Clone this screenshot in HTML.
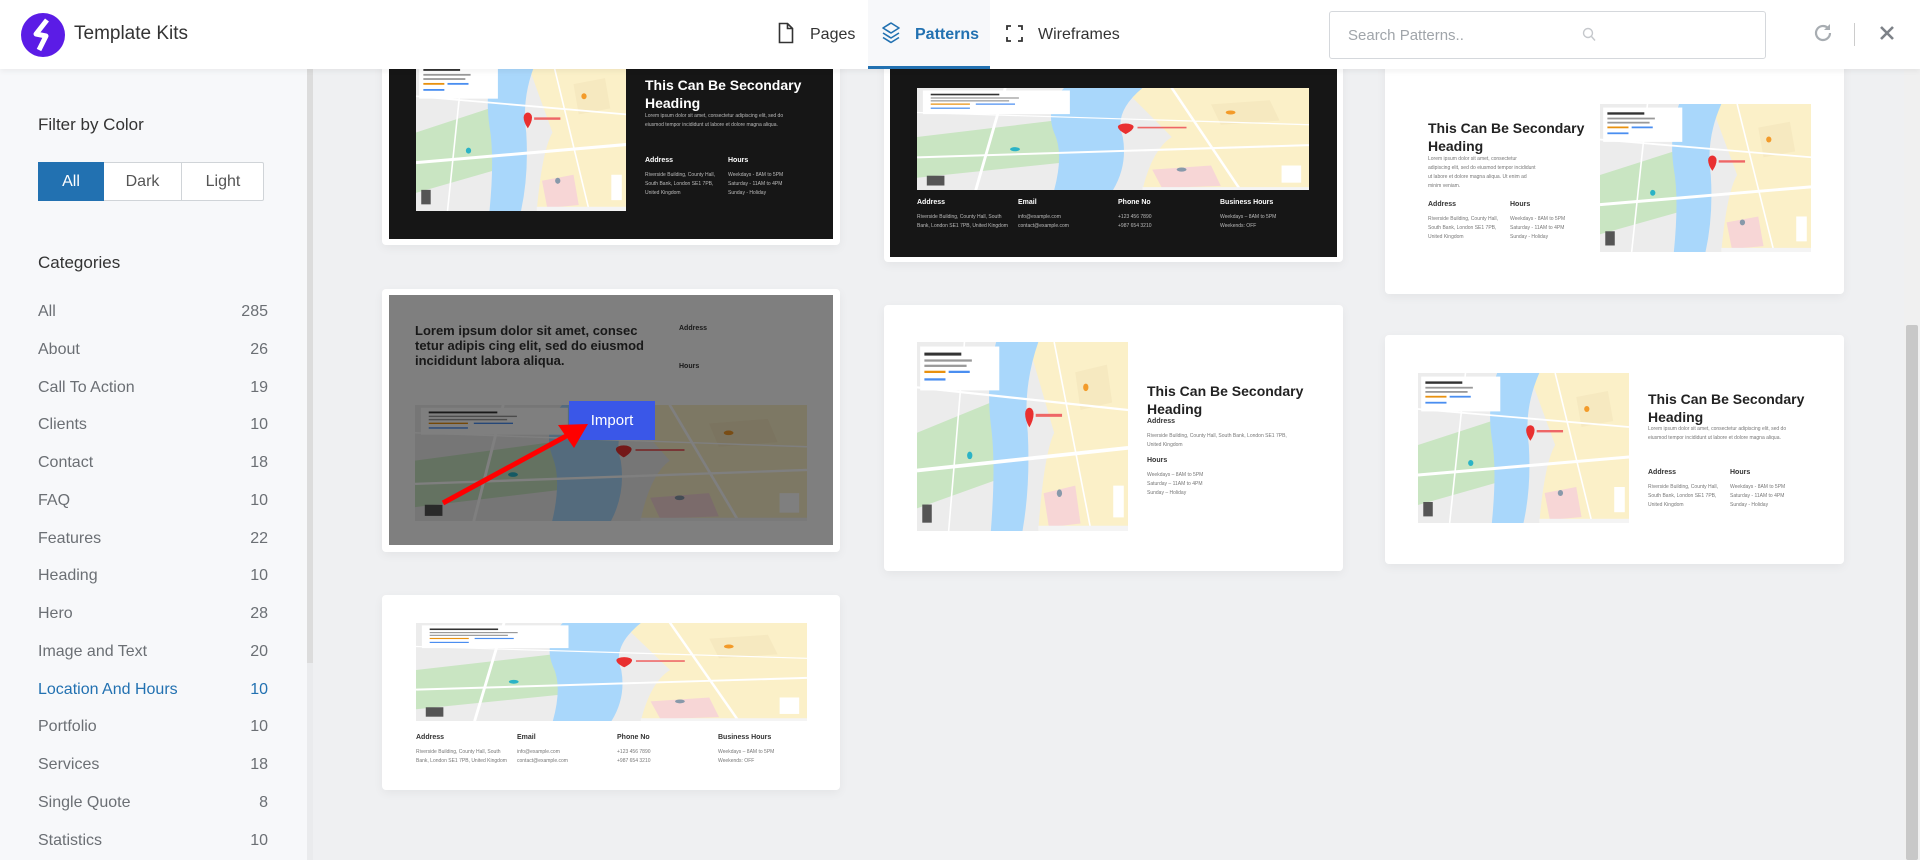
<!DOCTYPE html>
<html><head><meta charset="utf-8">
<style>
*{box-sizing:border-box;margin:0;padding:0}
body{width:1920px;height:860px;overflow:hidden;background:#eff0f2;font-family:"Liberation Sans",sans-serif;position:relative}
.abs{position:absolute}
#hdr{left:0;top:0;width:1920px;height:69px;background:#fff;box-shadow:0 2px 6px rgba(0,0,0,.06);z-index:10}
#side{left:0;top:69px;width:307px;height:791px;background:#f7f8fa}
#strip{left:307px;top:69px;width:6px;height:594px;background:#dcdcdc}
#strip2{left:307px;top:663px;width:6px;height:197px;background:#eaebed}
.cat{position:absolute;left:38px;width:230px;font-size:16px;color:#6b6f74;display:flex;justify-content:space-between}
.card{position:absolute;background:#fff;border-radius:4px;box-shadow:0 3px 10px rgba(0,0,0,.05)}
.dark{position:absolute;background:#161616}
.t{position:absolute;font-family:"Liberation Sans",sans-serif}
.h{font-weight:bold;font-size:14px;line-height:18px}
.lbl{font-weight:bold;font-size:7px}
.sm{font-size:5px;line-height:9px;color:#777}
svg.map{position:absolute}
</style></head><body>
<svg width="0" height="0" style="position:absolute">
<defs>
<symbol id="map" viewBox="0 0 400 250">
<rect width="400" height="250" fill="#ececec"/>
<path d="M210 0 L400 0 L400 250 L230 250 Q240 150 260 120 Z" fill="#fbf0c8"/>
<path d="M0 120 L140 80 L160 180 L0 220Z" fill="#c9e5c2"/>
<path d="M300 40 L360 30 L370 80 L310 90Z" fill="#f6e9c0"/>
<path d="M150 0 L230 0 Q200 60 210 120 Q215 190 200 250 L140 250 Q150 160 140 110 Q130 50 150 0Z" fill="#a9d7fb"/>
<path d="M0 170 L400 140" stroke="#fff" stroke-width="5"/>
<path d="M260 0 L330 250 M90 0 L60 250 M0 60 L400 90" stroke="#fff" stroke-width="3"/>
<path d="M240 200 L300 190 L310 240 L250 245Z" fill="#f7d6d6"/>
<rect x="6" y="6" width="150" height="58" fill="#fff"/>
<rect x="14" y="14" width="70" height="4" fill="#333"/>
<rect x="14" y="23" width="90" height="3" fill="#999"/>
<rect x="14" y="30" width="80" height="3" fill="#999"/>
<rect x="14" y="38" width="40" height="3" fill="#e8910f"/>
<rect x="60" y="38" width="40" height="3" fill="#4a8ef0"/>
<rect x="14" y="48" width="40" height="3" fill="#4a8ef0"/>
<path d="M205 95 a8 8 0 1 1 16 0 q0 8 -8 18 q-8 -10 -8 -18z" fill="#e93030"/>
<rect x="225" y="95" width="50" height="4" fill="#e66"/>
<circle cx="100" cy="150" r="5" fill="#2bb3c6"/><circle cx="320" cy="60" r="5" fill="#f39b2a"/><circle cx="270" cy="200" r="5" fill="#8899aa"/>
<rect x="372" y="190" width="20" height="42" fill="#fff"/>
<rect x="10" y="215" width="18" height="24" fill="#555"/>
<rect x="230" y="243" width="170" height="7" fill="#f4f4f4"/>
</symbol>
</defs></svg>

<div id="hdr" class="abs">
 <svg class="abs" style="left:20px;top:12px" width="46" height="46" viewBox="0 0 46 46"><circle cx="23" cy="23" r="22" fill="#5b1ce6"/><path d="M27 8 L16 22 L26 24 L19 38" stroke="#fff" stroke-width="5" fill="none" stroke-linejoin="round"/></svg>
 <div class="t" style="left:74px;top:23px;font-size:19px;color:#333">Template Kits</div>
 <svg class="abs" style="left:778px;top:22px" width="16" height="22" viewBox="0 0 16 22"><path d="M1.5 1.5h8l5 5v14h-13z M9.5 1.5v5h5" fill="none" stroke="#333" stroke-width="1.6"/></svg>
 <div class="t" style="left:810px;top:26px;font-size:16px;color:#333">Pages</div>
 <div class="abs" style="left:868px;top:0;width:122px;height:69px;background:#f7f8fa;border-bottom:3px solid #2271b1"></div>
 <svg class="abs" style="left:882px;top:22px" width="18" height="22" viewBox="0 0 18 22"><path d="M9 1 L17 6 L9 11 L1 6Z M1 11 L9 16 L17 11 M1 15.5 L9 20.5 L17 15.5" fill="none" stroke="#2271b1" stroke-width="1.6" stroke-linejoin="round"/></svg>
 <div class="t" style="left:915px;top:26px;font-size:16px;color:#2271b1;font-weight:bold">Patterns</div>
 <svg class="abs" style="left:1006px;top:25px" width="17" height="17" viewBox="0 0 17 17"><path d="M1 5V1h4 M12 1h4v4 M16 12v4h-4 M5 16H1v-4" fill="none" stroke="#333" stroke-width="1.8"/></svg>
 <div class="t" style="left:1038px;top:26px;font-size:16px;color:#333">Wireframes</div>
 <div class="abs" style="left:1329px;top:11px;width:437px;height:48px;border:1px solid #d5d8dc;border-radius:3px"></div>
 <div class="t" style="left:1348px;top:27px;font-size:15px;color:#a0a5aa">Search Patterns..</div>
 <svg class="abs" style="left:1582px;top:27px" width="14" height="15" viewBox="0 0 14 15"><circle cx="6" cy="6" r="4.5" fill="none" stroke="#c5c8cc" stroke-width="1.4"/><path d="M9.5 9.5L13 13.5" stroke="#c5c8cc" stroke-width="1.4"/></svg>
 <svg class="abs" style="left:1812px;top:22px" width="22" height="22" viewBox="0 0 22 22"><path d="M18 11a7 7 0 1 1-2.2-5.1" fill="none" stroke="#a8adb2" stroke-width="2.2"/><path d="M18 2v6h-6z" fill="#a8adb2"/></svg>
 <div class="abs" style="left:1854px;top:23px;width:1px;height:23px;background:#ccc"></div>
 <svg class="abs" style="left:1879px;top:25px" width="16" height="16" viewBox="0 0 16 16"><path d="M2 2L14 14M14 2L2 14" stroke="#7d8288" stroke-width="2.6"/></svg>
</div>

<div id="side" class="abs"></div>
<div id="strip" class="abs"></div><div id="strip2" class="abs"></div>
<div class="t" style="left:38px;top:115px;font-size:17px;color:#333">Filter by Color</div>
<div class="abs" style="left:38px;top:162px;width:226px;height:39px;border:1px solid #d0d4d8;border-radius:2px;background:#fff"></div>
<div class="abs" style="left:38px;top:162px;width:66px;height:39px;background:#2271b1;color:#fff;font-size:16px;text-align:center;line-height:39px">All</div>
<div class="abs" style="left:104px;top:162px;width:78px;height:39px;border-right:1px solid #d0d4d8;color:#555;font-size:16px;text-align:center;line-height:39px">Dark</div>
<div class="abs" style="left:182px;top:162px;width:82px;height:39px;color:#555;font-size:16px;text-align:center;line-height:39px">Light</div>
<div class="t" style="left:38px;top:253px;font-size:17px;color:#333">Categories</div>
<div class="cat" style="top:303px"><span>All</span><span>285</span></div>
<div class="cat" style="top:341px"><span>About</span><span>26</span></div>
<div class="cat" style="top:379px"><span>Call To Action</span><span>19</span></div>
<div class="cat" style="top:416px"><span>Clients</span><span>10</span></div>
<div class="cat" style="top:454px"><span>Contact</span><span>18</span></div>
<div class="cat" style="top:492px"><span>FAQ</span><span>10</span></div>
<div class="cat" style="top:530px"><span>Features</span><span>22</span></div>
<div class="cat" style="top:567px"><span>Heading</span><span>10</span></div>
<div class="cat" style="top:605px"><span>Hero</span><span>28</span></div>
<div class="cat" style="top:643px"><span>Image and Text</span><span>20</span></div>
<div class="cat" style="top:681px;color:#2271b1"><span>Location And Hours</span><span>10</span></div>
<div class="cat" style="top:718px"><span>Portfolio</span><span>10</span></div>
<div class="cat" style="top:756px"><span>Services</span><span>18</span></div>
<div class="cat" style="top:794px"><span>Single Quote</span><span>8</span></div>
<div class="cat" style="top:832px"><span>Statistics</span><span>10</span></div>

<div class="abs" style="left:1904px;top:69px;width:16px;height:791px;background:#f0f0f0"></div>
<div class="abs" style="left:1906px;top:325px;width:12px;height:535px;background:#c8c8c8;border-radius:2px"></div>

<!-- col1 card1 -->
<div class="card" style="left:382px;top:40px;width:458px;height:205px"></div>
<div class="dark" style="left:389px;top:40px;width:444px;height:199px"></div>
<svg class="map" style="left:416px;top:60px" width="210" height="151" viewBox="0 0 400 250" preserveAspectRatio="none"><use href="#map"/></svg>
<div class="t h" style="left:645px;top:76px;color:#fff">This Can Be Secondary<br>Heading</div>
<div class="t sm" style="left:645px;top:112px;color:#bbb;width:150px">Lorem ipsum dolor sit amet, consectetur adipiscing elit, sed do eiusmod tempor incididunt ut labore et dolore magna aliqua.</div>
<div class="t lbl" style="left:645px;top:157px;color:#fff">Address</div><div class="t lbl" style="left:728px;top:157px;color:#fff">Hours</div>
<div class="t sm" style="left:645px;top:171px;color:#bbb">Riverside Building, County Hall,<br>South Bank, London SE1 7PB,<br>United Kingdom</div>
<div class="t sm" style="left:728px;top:171px;color:#bbb">Weekdays - 8AM to 5PM<br>Saturday - 11AM to 4PM<br>Sunday - Holiday</div>

<!-- col1 card2 hover -->
<div class="card" style="left:382px;top:289px;width:458px;height:263px"></div>
<div class="abs" style="left:389px;top:295px;width:444px;height:250px;background:#fff;overflow:hidden">
 <div class="t" style="left:26px;top:28px;width:240px;font-weight:bold;font-size:13px;line-height:15px;color:#333">Lorem ipsum dolor sit amet, consec tetur adipis cing elit, sed do eiusmod incididunt labora aliqua.</div>
 <div class="t lbl" style="left:290px;top:30px;color:#333">Address</div>
 <div class="t lbl" style="left:290px;top:68px;color:#333">Hours</div>
 <svg class="map" style="left:26px;top:110px" width="392" height="116" viewBox="0 0 400 250" preserveAspectRatio="none"><use href="#map"/></svg>
 <div class="abs" style="left:0;top:0;width:444px;height:250px;background:rgba(0,0,0,.5)"></div>
</div>
<div class="abs" style="left:569px;top:401px;width:86px;height:39px;background:#3a57e8;color:#fff;font-size:15px;text-align:center;line-height:39px">Import</div>
<svg class="abs" style="left:430px;top:410px" width="170" height="100" viewBox="0 0 170 100"><path d="M13 93 L140 24" stroke="#f00" stroke-width="5"/><path d="M158 14 L128 15 L144 38Z" fill="#f00"/></svg>

<!-- col1 card3 -->
<div class="card" style="left:382px;top:595px;width:458px;height:195px"></div>
<svg class="map" style="left:416px;top:623px" width="391" height="98" viewBox="0 0 400 250" preserveAspectRatio="none"><use href="#map"/></svg>
<div class="t lbl" style="left:416px;top:734px;color:#333">Address</div><div class="t lbl" style="left:517px;top:734px;color:#333">Email</div><div class="t lbl" style="left:617px;top:734px;color:#333">Phone No</div><div class="t lbl" style="left:718px;top:734px;color:#333">Business Hours</div>
<div class="t sm" style="left:416px;top:748px">Riverside Building, County Hall, South<br>Bank, London SE1 7PB, United Kingdom</div>
<div class="t sm" style="left:517px;top:748px">info@example.com<br>contact@example.com</div>
<div class="t sm" style="left:617px;top:748px">+123 456 7890<br>+987 654 3210</div>
<div class="t sm" style="left:718px;top:748px">Weekdays – 8AM to 5PM<br>Weekends: OFF</div>

<!-- col2 card1 -->
<div class="card" style="left:884px;top:40px;width:459px;height:222px"></div>
<div class="dark" style="left:890px;top:40px;width:447px;height:217px"></div>
<svg class="map" style="left:917px;top:88px" width="392" height="102" viewBox="0 0 400 250" preserveAspectRatio="none"><use href="#map"/></svg>
<div class="t lbl" style="left:917px;top:199px;color:#fff">Address</div><div class="t lbl" style="left:1018px;top:199px;color:#fff">Email</div><div class="t lbl" style="left:1118px;top:199px;color:#fff">Phone No</div><div class="t lbl" style="left:1220px;top:199px;color:#fff">Business Hours</div>
<div class="t sm" style="left:917px;top:213px;color:#bbb">Riverside Building, County Hall, South<br>Bank, London SE1 7PB, United Kingdom</div>
<div class="t sm" style="left:1018px;top:213px;color:#bbb">info@example.com<br>contact@example.com</div>
<div class="t sm" style="left:1118px;top:213px;color:#bbb">+123 456 7890<br>+987 654 3210</div>
<div class="t sm" style="left:1220px;top:213px;color:#bbb">Weekdays – 8AM to 5PM<br>Weekends: OFF</div>

<!-- col2 card2 -->
<div class="card" style="left:884px;top:305px;width:459px;height:266px"></div>
<svg class="map" style="left:917px;top:342px" width="211" height="189" viewBox="0 0 400 250" preserveAspectRatio="none"><use href="#map"/></svg>
<div class="t h" style="left:1147px;top:382px;color:#222">This Can Be Secondary<br>Heading</div>
<div class="t lbl" style="left:1147px;top:418px;color:#333">Address</div>
<div class="t sm" style="left:1147px;top:432px">Riverside Building, County Hall, South Bank, London SE1 7PB,<br>United Kingdom</div>
<div class="t lbl" style="left:1147px;top:457px;color:#333">Hours</div>
<div class="t sm" style="left:1147px;top:471px">Weekdays – 8AM to 5PM<br>Saturday – 11AM to 4PM<br>Sunday – Holiday</div>

<!-- col3 card1 -->
<div class="card" style="left:1385px;top:40px;width:459px;height:254px"></div>
<div class="t h" style="left:1428px;top:119px;color:#222">This Can Be Secondary<br>Heading</div>
<div class="t sm" style="left:1428px;top:155px;width:112px">Lorem ipsum dolor sit amet, consectetur adipiscing elit, sed do eiusmod tempor incididunt ut labore et dolore magna aliqua. Ut enim ad minim veniam.</div>
<div class="t lbl" style="left:1428px;top:201px;color:#333">Address</div><div class="t lbl" style="left:1510px;top:201px;color:#333">Hours</div>
<div class="t sm" style="left:1428px;top:215px">Riverside Building, County Hall,<br>South Bank, London SE1 7PB,<br>United Kingdom</div>
<div class="t sm" style="left:1510px;top:215px">Weekdays - 8AM to 5PM<br>Saturday - 11AM to 4PM<br>Sunday - Holiday</div>
<svg class="map" style="left:1600px;top:104px" width="211" height="148" viewBox="0 0 400 250" preserveAspectRatio="none"><use href="#map"/></svg>

<!-- col3 card2 -->
<div class="card" style="left:1385px;top:335px;width:459px;height:229px"></div>
<svg class="map" style="left:1418px;top:373px" width="211" height="150" viewBox="0 0 400 250" preserveAspectRatio="none"><use href="#map"/></svg>
<div class="t h" style="left:1648px;top:390px;color:#222">This Can Be Secondary<br>Heading</div>
<div class="t sm" style="left:1648px;top:425px;width:140px">Lorem ipsum dolor sit amet, consectetur adipiscing elit, sed do eiusmod tempor incididunt ut labore et dolore magna aliqua.</div>
<div class="t lbl" style="left:1648px;top:469px;color:#333">Address</div><div class="t lbl" style="left:1730px;top:469px;color:#333">Hours</div>
<div class="t sm" style="left:1648px;top:483px">Riverside Building, County Hall,<br>South Bank, London SE1 7PB,<br>United Kingdom</div>
<div class="t sm" style="left:1730px;top:483px">Weekdays - 8AM to 5PM<br>Saturday - 11AM to 4PM<br>Sunday - Holiday</div>
</body></html>
